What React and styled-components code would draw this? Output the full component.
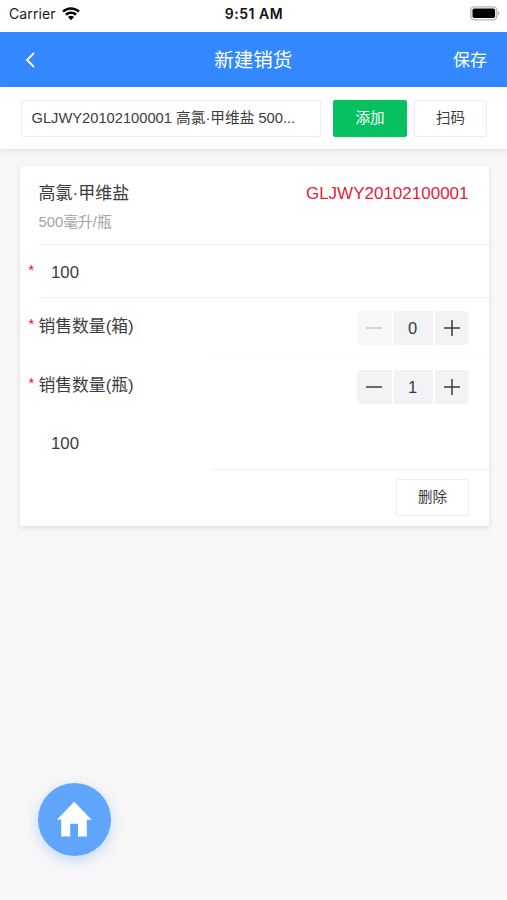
import React, { useState } from 'react';
import styled, { createGlobalStyle, css } from 'styled-components';

const GlobalStyle = createGlobalStyle`
  * {
    box-sizing: border-box;
  }

  body {
    margin: 0;
    background: #f7f7f7;
    font-family: "Liberation Sans", "Noto Sans CJK SC", sans-serif;
    color: #3c3c3e;
  }

  button {
    padding: 0;
    border: 0;
    background: none;
    font: inherit;
    color: inherit;
  }
`;

const Page = styled.div`
  height: 900px;
  overflow: hidden;
  background: #f7f7f7;
`;

const StatusBar = styled.div`
  display: grid;
  grid-template-columns: 1fr auto 1fr;
  align-items: center;
  height: 31.5px;
  padding: 0 7px 3.5px 9px;
  background: #fff;
  font-family: Inter, sans-serif;
  font-size: 14px;
  line-height: 20px;
  color: #1a1a1a;
`;

const Carrier = styled.div`
  display: flex;
  align-items: center;
  gap: 6px;
  letter-spacing: 0.1px;
`;

const Time = styled.div`
  margin-right: 1px;
  font-weight: 600;
  font-size: 14px;
  letter-spacing: 0.5px;
  color: #111;
`;

const Battery = styled.svg`
  justify-self: end;
  margin-top: -2px;
`;

const NavBar = styled.header`
  display: grid;
  grid-template-columns: 1fr auto 1fr;
  align-items: center;
  height: 55.5px;
  padding: 1px 20px 0 24px;
  background: #3388ff;
  color: #fff;
`;

const BackButton = styled.button`
  display: flex;
  justify-self: start;
`;

const Title = styled.h1`
  margin: 1px 4.5px 0 0;
  font-size: 19.5px;
  font-weight: 400;
  line-height: 28px;
`;

const SaveButton = styled.button`
  justify-self: end;
  padding-top: 2px;
  font-size: 17px;
  line-height: 26px;
`;

const Toolbar = styled.div`
  display: flex;
  height: 62px;
  padding: 13px 19px 12px 21px;
  background: #fff;
  box-shadow: 0 2px 5px rgba(0, 0, 0, 0.09);
`;

const ProductField = styled.div`
  width: 300px;
  height: 37px;
  padding: 0 9.5px;
  border: 1px solid #ebedf0;
  border-radius: 2px;
  font-size: 14.7px;
  line-height: 35px;
  white-space: nowrap;
`;

const Button = styled.button`
  width: 73px;
  height: 37px;
  border: 1px solid #ebedf0;
  border-radius: 2px;
  background: #fff;
  font-size: 14.5px;
  line-height: 33px;

  ${({ $primary }) => $primary && css`
    width: 74px;
    margin: 0 7px 0 12px;
    border-color: #07c160;
    background: #07c160;
    color: #fff;
  `};
`;

const Card = styled.section`
  width: 469px;
  margin: 17px 0 0 19.5px;
  border-radius: 2px;
  background: #fff;
  box-shadow: 0 2px 5px rgba(0, 0, 0, 0.1);
`;

const CardHeader = styled.div`
  display: flex;
  justify-content: space-between;
  height: 79px;
  margin-left: 19px;
  padding: 16px 20px 0 0;
  border-bottom: 1px solid #f2f2f3;
`;

const ProductName = styled.div`
  font-size: 17px;
  line-height: 24px;
`;

const Spec = styled.div`
  margin-top: 5px;
  font-size: 14.8px;
  line-height: 22px;
  color: #a3a3a5;
`;

const ProductCode = styled.div`
  font-size: 17px;
  line-height: 24px;
  color: #e8203c;
`;

const Row = styled.div`
  display: flex;
  align-items: center;
  justify-content: space-between;
  height: ${({ $height }) => $height}px;
  margin-left: 19px;
  padding-right: 19.5px;
  border-bottom: 1px solid ${({ $line }) => ($line ? '#f3f3f4' : 'transparent')};
`;

const ShortLine = styled.div`
  height: 1px;
  margin: -1px 0 0 191px;
  background: ${({ $faint }) => ($faint ? '#fbfbfb' : '#f2f2f3')};
`;

const Label = styled.div`
  display: flex;
  align-items: flex-start;
  margin-left: -10px;
  font-size: 16.8px;
  line-height: 24px;
`;

const Star = styled.span`
  width: 10px;
  font-size: 14.5px;
  line-height: ${({ $raised }) => ($raised ? 17 : 22)}px;
  color: #ee0a24;
`;

const Value = styled.div`
  ${({ $inset }) => $inset ? css`
    padding: 3px 0 0 12.5px;
    line-height: 22px;
  ` : css`
    margin-top: -1px;
    padding-bottom: 1px;
  `};
`;

const Stepper = styled.div`
  display: flex;
  gap: 2px;
`;

const StepButton = styled.button`
  display: flex;
  align-items: center;
  justify-content: center;
  width: 34.5px;
  height: 34px;
  border-radius: ${({ $end }) => ($end ? '0 4px 4px 0' : '4px 0 0 4px')};
  background: #f2f3f5;
  color: #3c3c3e;

  &:disabled {
    background: #f7f8fa;
    color: #c8c9cc;
  }
`;

const StepValue = styled.div`
  width: 39px;
  height: 34px;
  padding-right: 1px;
  background: #f2f3f5;
  font-size: 16.5px;
  line-height: 35px;
  text-align: center;
`;

const CardFooter = styled.div`
  display: flex;
  justify-content: flex-end;
  height: 56px;
  padding: 9px 19.5px 0 0;

  ${Button} {
    line-height: 35px;
  }
`;

const HomeButton = styled.button`
  position: fixed;
  left: 37.5px;
  top: 782.5px;
  display: flex;
  align-items: center;
  justify-content: center;
  width: 73px;
  height: 73px;
  border-radius: 50%;
  background: #5ea5fb;
  box-shadow: 0 4px 13px rgba(51, 136, 255, 0.28);
`;

const WifiIcon = () => (
  <svg width="18" height="14" viewBox="0 0 18 14" fill="#000">
    <path d="M9 .2C5.700 .2 2.600 1.500 .2 3.700L1.900 5.600C3.800 3.800 6.300 2.800 9 2.800S14.200 3.800 16.100 5.600L17.800 3.700C15.400 1.500 12.300 .2 9 .2Z" />
    <path d="M9 4.500C6.700 4.500 4.700 5.300 3.100 6.800L4.900 8.700C6 7.700 7.400 7.100 9 7.100S12 7.700 13.100 8.700L14.900 6.800C13.300 5.300 11.300 4.500 9 4.500Z" />
    <path d="M9 8.700C7.900 8.700 6.900 9.100 6 9.900L9 13.300L12 9.900C11.100 9.100 10.100 8.700 9 8.700Z" />
  </svg>
);

const StepIcon = ({ plus }) => (
  <svg width="16" height="16" viewBox="0 0 16 16" stroke="currentColor" strokeWidth="1.5">
    <path d={plus ? 'M0 8H16M8 0V16' : 'M0 8H16'} />
  </svg>
);

const QuantityRow = ({ label, initial, height }) => {
  const [count, setCount] = useState(initial);

  return (
    <Row $height={height}>
      <Label>
        <Star $raised>*</Star>
        <Value>{label}</Value>
      </Label>
      <Stepper>
        <StepButton disabled={count === 0} onClick={() => setCount(count - 1)}>
          <StepIcon />
        </StepButton>
        <StepValue>{count}</StepValue>
        <StepButton $end onClick={() => setCount(count + 1)}>
          <StepIcon plus />
        </StepButton>
      </Stepper>
    </Row>
  );
};

export default function App() {
  return (
    <Page>
      <GlobalStyle />
      <StatusBar>
        <Carrier>
          Carrier
          <WifiIcon />
        </Carrier>
        <Time>9:51 AM</Time>
        <Battery width="30" height="15" viewBox="0 0 30 15">
          <rect x=".8" y=".8" width="26" height="13" rx="3.500" fill="#fff" stroke="#b5b5b5" strokeWidth="1.300" />
          <rect x="2.500" y="2.500" width="22.600" height="9.600" rx="1.800" />
          <path d="M28 5C29.800 5.600 29.800 9 28 9.600Z" fill="#b5b5b5" />
        </Battery>
      </StatusBar>
      <NavBar>
        <BackButton aria-label="返回">
          <svg width="12" height="16" viewBox="0 0 12 16" fill="none" stroke="#fff" strokeWidth="1.800">
            <path d="M10 1L3 8L10 15" />
          </svg>
        </BackButton>
        <Title>新建销货</Title>
        <SaveButton>保存</SaveButton>
      </NavBar>
      <Toolbar>
        <ProductField>GLJWY20102100001 高氯·甲维盐 500...</ProductField>
        <Button $primary>添加</Button>
        <Button>扫码</Button>
      </Toolbar>
      <Card>
        <CardHeader>
          <div>
            <ProductName>高氯·甲维盐</ProductName>
            <Spec>500毫升/瓶</Spec>
          </div>
          <ProductCode>GLJWY20102100001</ProductCode>
        </CardHeader>
        <Row $height={53} $line>
          <Label>
            <Star>*</Star>
            <Value $inset>100</Value>
          </Label>
        </Row>
        <QuantityRow label="销售数量(箱)" initial={0} height={60} />
        <ShortLine $faint />
        <QuantityRow label="销售数量(瓶)" initial={1} height={58} />
        <Row $height={54}>
          <Label>
            <Star />
            <Value $inset>100</Value>
          </Label>
        </Row>
        <ShortLine />
        <CardFooter>
          <Button>删除</Button>
        </CardFooter>
      </Card>
      <HomeButton aria-label="首页">
        <svg width="36" height="36" viewBox="0 0 36 36" fill="#fff">
          <path d="M18.200 .8L.8 18.800H5.200V35.500H14.200V22.800H22V35.500H30.800V18.800H35.600Z" />
        </svg>
      </HomeButton>
    </Page>
  );
}
